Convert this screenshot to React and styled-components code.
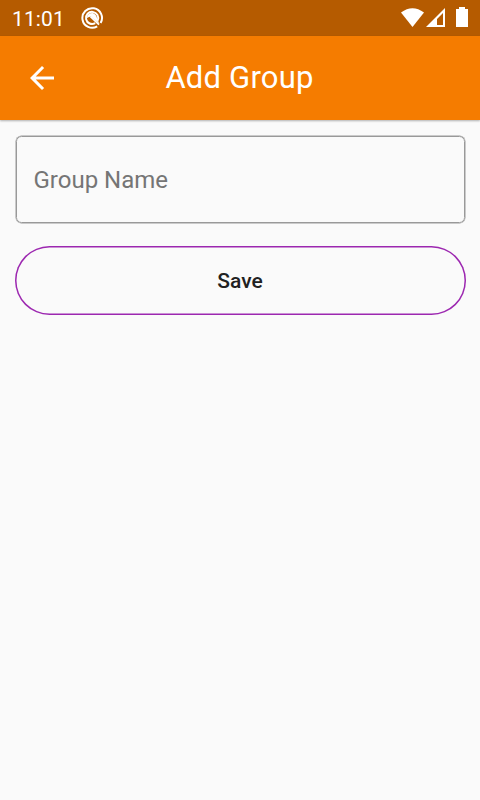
import React from "react";
import styled, { createGlobalStyle } from "styled-components";

const GlobalStyle = createGlobalStyle`
  * { box-sizing: border-box; }
  body { margin: 0; background: #fafafa; font-family: Roboto, sans-serif; }
`;
const Screen = styled.main`
  width: 100%;
  height: 800px;
  display: flex;
  flex-direction: column;
  background: #fafafa;
`;
const StatusBar = styled.div`
  height: 36px;
  flex: none;
  display: flex;
  align-items: center;
  padding: 0 12px;
  background: #b55b00;
  color: #fff;
`;
const Clock = styled.span`
  width: 68px;
  font-size: 21px;
  line-height: 36px;
  padding-top: 1px;
  letter-spacing: 0.1px;
`;
const StatusIcons = styled.div`
  margin-left: auto;
  display: flex;
`;
const AppBar = styled.header`
  height: 84px;
  flex: none;
  display: grid;
  grid-template-columns: 84px 1fr 84px;
  align-items: center;
  background: #f57c00;
  color: #fff;
  box-shadow: 0 1px 2px rgba(0, 0, 0, 0.3);
`;
const BackButton = styled.button`
  display: grid;
  place-items: center;
  height: 84px;
  padding: 0;
  border: 0;
  background: none;
  color: inherit;
`;
const Title = styled.h1`
  margin: 0;
  padding: 0 1px 2px 0;
  text-align: center;
  font-size: 31px;
  font-weight: 400;
  letter-spacing: 0.2px;
  white-space: nowrap;
`;
const Form = styled.form`
  display: flex;
  flex-direction: column;
  gap: 23px;
  padding: 16px 14px 0 15px;
`;
const NameField = styled.input`
  height: 87px;
  margin: 0 1px;
  padding: 0 16.5px 0;
  border: 1px solid #999;
  border-radius: 5.5px;
  box-shadow: 0 0 0 0.5px #999;
  background: transparent;
  font: 400 24px Roboto, sans-serif;
  outline: 0;
  &::placeholder { color: #757575; opacity: 1; }
`;
const SaveButton = styled.button`
  height: 69px;
  padding: 0 1px 0 0;
  border: 0;
  border-radius: 35px;
  box-shadow: inset 0 0 0 1.5px #9c27b0;
  background: transparent;
  color: #212121;
  font: 500 21px Roboto, sans-serif;
`;

export default function App() {
  return (
    <Screen>
      <GlobalStyle />
      <StatusBar>
        <Clock>11:01</Clock>
        <svg width="24" height="24" viewBox="0 0 24 24" fill="none" stroke="#fff">
          <path d="M17.2 20.4A9.8 9.8 0 1 1 20.6 17" strokeWidth="2" />
          <path d="M15.2 17.2A6.1 6.1 0 1 1 17.6 14.6" strokeWidth="2" />
          <path d="M7 11Q8 7 12.5 7Q16.5 8 17.2 13L19.4 17.6L11 10.5Q9 10.5 7 12Z" fill="#fff" stroke="none" />
          <path d="M10.5 10.5L19 18.6" strokeWidth="1.8" />
        </svg>
        <StatusIcons>
          <svg width="68" height="24" viewBox="400 6 68 24" fill="#fff">
            <path d="M401 12.5Q412.5 4 424 12.5L412.5 27Z" />
            <path fillRule="evenodd" d="M445 8V27H426ZM443 13L437 19V25H443Z" />
            <path d="M456 9h3V7h6v2h3v18h-12z" />
          </svg>
        </StatusIcons>
      </StatusBar>
      <AppBar>
        <BackButton type="button" aria-label="Back">
          <svg width="36" height="36" viewBox="0 0 24 24" fill="currentColor">
            <path d="M20 11H7.83l5.59-5.59L12 4l-8 8 8 8 1.41-1.41L7.83 13H20v-2z" />
          </svg>
        </BackButton>
        <Title>Add Group</Title>
      </AppBar>
      <Form onSubmit={(e) => e.preventDefault()}>
        <NameField placeholder="Group Name" />
        <SaveButton>Save</SaveButton>
      </Form>
    </Screen>
  );
}
